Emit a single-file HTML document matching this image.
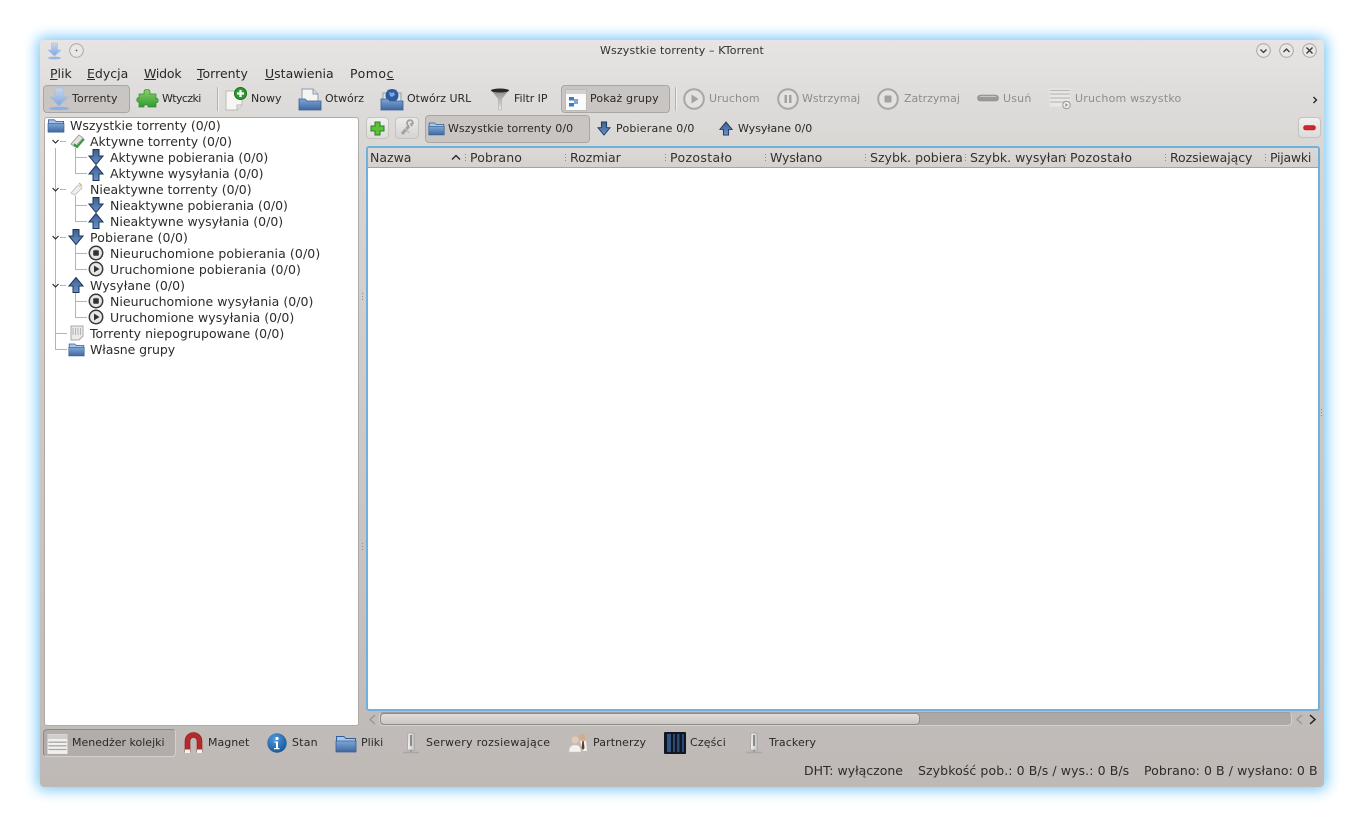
<!DOCTYPE html>
<html lang="pl"><head><meta charset="utf-8"><title>Wszystkie torrenty - KTorrent</title>
<style>
html,body{margin:0;padding:0;background:#fff;width:1364px;height:827px;overflow:hidden}
body{position:relative;font-family:"DejaVu Sans",sans-serif;color:#2a2826}
#win{position:absolute;left:40px;top:40px;width:1284px;height:747px;border-radius:4px;box-shadow:0 0 14px 3px #7cc8f8;background:linear-gradient(#e6e5e3 0,#dedcda 60px,#d7d4d1 130px,#c0bbb8 700px,#bfb9b6 100%)}
.t{position:absolute;white-space:nowrap;font-size:11px;line-height:16px;height:16px}
.m{font-size:12.5px}.r{font-size:12.5px;color:#2e2c2a}.d{color:#8f8d8b}.h{font-size:12.5px;color:#33312f}
.b{position:absolute;box-sizing:border-box;border:1px solid #aaa6a3;border-radius:4px;background:#c9c5c2}
svg{position:absolute;overflow:visible}
u{text-decoration:underline}
.tl{position:absolute;background:#b5b2af}
</style></head><body>
<svg width="0" height="0" style="left:0;top:0"><defs>
<linearGradient id="bl" x1="0" y1="0" x2="0" y2="1"><stop offset="0" stop-color="#7ea6d8"/><stop offset="1" stop-color="#3f68a0"/></linearGradient>
<linearGradient id="dn" x1="0" y1="0" x2="0" y2="1"><stop offset="0" stop-color="#3a5f92"/><stop offset="1" stop-color="#6b93c8"/></linearGradient>
<linearGradient id="ltb" x1="0" y1="0" x2="0" y2="1"><stop offset="0" stop-color="#c9d6ea"/><stop offset="1" stop-color="#7ea8e2"/></linearGradient>
<linearGradient id="gr" x1="0" y1="0" x2="0" y2="1"><stop offset="0" stop-color="#8ed062"/><stop offset="1" stop-color="#2f9a35"/></linearGradient>
<linearGradient id="fn" x1="0" y1="0" x2="0" y2="1"><stop offset="0" stop-color="#8a8886"/><stop offset="1" stop-color="#eceae8"/></linearGradient>
<linearGradient id="tw" x1="0" y1="0" x2="1" y2="0"><stop offset="0" stop-color="#f4f3f2"/><stop offset="1" stop-color="#c2c0be"/></linearGradient>
<radialGradient id="inf" cx=".4" cy=".3" r=".8"><stop offset="0" stop-color="#4f9ade"/><stop offset="1" stop-color="#12508f"/></radialGradient>
<symbol id="folder" viewBox="0 0 22 20"><path d="M1 3h8l2 2h10v14H1z" fill="#2f5e9a"/><path d="M2 4h7l1.500 2H20v2H2z" fill="#a9c4e6"/><path d="M1 8h20v11H1z" fill="url(#bl)" stroke="#36608f" stroke-width=".8"/></symbol>
<symbol id="down" viewBox="0 0 16 16"><path d="M5 .5h6v6.500h4L8 15.500 1 7h4z" fill="url(#dn)" stroke="#1c3558" stroke-width="1"/></symbol>
<symbol id="up" viewBox="0 0 16 16"><path d="M5 15.500h6V9h4L8 .5 1 9h4z" fill="url(#dn)" stroke="#1c3558" stroke-width="1"/></symbol>
<symbol id="stop" viewBox="0 0 16 16"><circle cx="8" cy="8" r="6.700" fill="#e8e7e5" stroke="#3a3836" stroke-width="1.500"/><rect x="5.200" y="5.200" width="5.600" height="5.600" rx="1" fill="#343230"/></symbol>
<symbol id="play" viewBox="0 0 16 16"><circle cx="8" cy="8" r="6.700" fill="#e8e7e5" stroke="#3a3836" stroke-width="1.500"/><path d="M6 4.500l5.500 3.500L6 11.500z" fill="#343230"/></symbol>
<symbol id="tower" viewBox="0 0 16 22"><path d="M5 1h6l.5 17h-7z" fill="url(#tw)" stroke="#a5a3a1" stroke-width=".7"/><path d="M8 3v11" stroke="#555" stroke-width="1.200"/><path d="M7 18h2v2.500H7z" fill="#999"/><path d="M0 20.500h16" stroke="#a9a7a5" stroke-width="1.600"/></symbol>
<symbol id="list" viewBox="0 0 22 22"><rect width="22" height="22" fill="#f1f0ef" stroke="#ccc" stroke-width=".5"/><path d="M0 3h22" stroke="#cfcecd" stroke-width="5"/><path d="M1 9h20M1 13h20M1 17h20" stroke="#aaa8a6" stroke-width="1.400"/></symbol>
</defs></svg>

<div id="win"></div>

<!-- title bar -->
<svg style="left:47px;top:42px" width="15" height="18" viewBox="0 0 15 18"><path d="M4.500 1h6v7h3.500l-6.500 6L1 8h3.500z" fill="url(#ltb)" stroke="#a6bcdc" stroke-width=".6"/><ellipse cx="7.500" cy="16" rx="6.500" ry="1.400" fill="#97b7e4"/></svg>
<svg style="left:69px;top:43px" width="15" height="15" viewBox="0 0 15 15"><circle cx="7.500" cy="7.500" r="6.800" fill="#e9e8e6" stroke="#aaa8a6"/><circle cx="7.500" cy="7.500" r=".9" fill="#555"/></svg>
<div class="t" style="left:600px;top:43px;color:#33312f;letter-spacing:.14px">Wszystkie torrenty – KTorrent</div>
<svg style="left:1256px;top:43px" width="68" height="16" viewBox="0 0 68 16">
<g fill="#e9e8e6" stroke="#a9a7a5"><circle cx="7.500" cy="7.500" r="6.800"/><circle cx="30.500" cy="7.500" r="6.800"/><circle cx="53.500" cy="7.500" r="6.800"/></g>
<g fill="none" stroke="#3a3836" stroke-width="1.300"><path d="M4.500 6.500l3 3 3-3M27.500 9l3-3 3 3M50.500 4.500l6 6M56.500 4.500l-6 6"/></g></svg>

<!-- menu -->
<div class="t m" style="left:50px;top:66px"><u>P</u>lik</div>
<div class="t m" style="left:87px;top:66px"><u>E</u>dycja</div>
<div class="t m" style="left:144px;top:66px;letter-spacing:-.2px"><u>W</u>idok</div>
<div class="t m" style="left:197px;top:66px"><u>T</u>orrenty</div>
<div class="t m" style="left:265px;top:66px"><u>U</u>stawienia</div>
<div class="t m" style="left:350px;top:66px;letter-spacing:.5px">Pomo<u>c</u></div>

<!-- main toolbar -->
<div class="b" style="left:43px;top:85px;width:87px;height:28px"></div>
<svg style="left:48px;top:87px" width="22" height="24" viewBox="0 0 22 24"><path d="M7 1h8v9h5l-9 9-9-9h5z" fill="url(#ltb)" stroke="#a7bcdc" stroke-width=".7"/><ellipse cx="11" cy="21.500" rx="10" ry="1.800" fill="#8db0e4"/></svg>
<div class="t" style="left:72px;top:91px;letter-spacing:.1px">Torrenty</div>
<svg style="left:136px;top:88px" width="23" height="21" viewBox="0 0 23 21"><path d="M8 6V3.500C8 1 14 1 14 3.500V6h6v4.500c3-1 3 5 0 4V19H12c1-3-5-3-4 0H3v-5C0 15 0 8.500 3 10V6z" fill="url(#gr)" stroke="#2f8a32" stroke-width=".7"/></svg>
<div class="t" style="left:162px;top:91px;letter-spacing:-.6px">Wtyczki</div>
<div style="position:absolute;left:217px;top:87px;width:1px;height:24px;background:#b4b1ae;border-right:1px solid #efeeec"></div>
<svg style="left:224px;top:87px" width="24" height="24" viewBox="0 0 24 24"><path d="M2 4h13l3 3v11l-5 5H2z" fill="#f7f6f5" stroke="#bcbab8"/><path d="M13 23v-5h5" fill="#e0dfdd" stroke="#bcbab8"/><circle cx="16.500" cy="6.500" r="6" fill="#2d9a2d" stroke="#15701a"/><path d="M16.500 3v7M13 6.500h7" stroke="#fff" stroke-width="2.200"/></svg>
<div class="t" style="left:251px;top:91px">Nowy</div>
<svg style="left:298px;top:87px" width="24" height="24" viewBox="0 0 24 24"><path d="M4 2h11l5 5v8H4z" fill="#f6f5f4" stroke="#8f9ab0"/><path d="M15 2v5h5" fill="#d8d8d8" stroke="#8f9ab0"/><path d="M1 12h6l2 2h14v9H1z" fill="url(#bl)" stroke="#36608f" stroke-width=".8"/></svg>
<div class="t" style="left:325px;top:91px">Otwórz</div>
<svg style="left:380px;top:87px" width="24" height="24" viewBox="0 0 24 24"><path d="M3 6h4l1-3h8l1 3h4v9H3z" fill="#dfe3ea" stroke="#8f9ab0"/><circle cx="12" cy="8.500" r="6.500" fill="#2d5aa0"/><path d="M9 5l3 1 2-1 1 3-3 2-2-1z" fill="#7ea6d8"/><path d="M1 12h7l2 2h13v9H1z" fill="url(#bl)" stroke="#36608f" stroke-width=".8"/></svg>
<div class="t" style="left:407px;top:91px">Otwórz URL</div>
<svg style="left:489px;top:87px" width="22" height="24" viewBox="0 0 22 24"><path d="M2 3h18L12.500 12v11h-3V12z" fill="url(#fn)" stroke="#a5a3a1" stroke-width=".5"/><ellipse cx="11" cy="3.500" rx="9" ry="2" fill="#2b2a29"/></svg>
<div class="t" style="left:514px;top:91px;letter-spacing:-.05px">Filtr IP</div>
<div class="b" style="left:561px;top:85px;width:109px;height:28px"></div>
<svg style="left:565px;top:89px" width="22" height="22" viewBox="0 0 22 22"><rect x=".5" y=".5" width="21" height="21" fill="#fbfbfa" stroke="#bbb"/><path d="M1 3h20" stroke="#d2d1d0" stroke-width="4"/><path d="M4 8h5v3.500H4zM4 14h5v3.500H4z" fill="#3d7ac0"/><path d="M9 10h4v5H9z" fill="#7aa6d8"/></svg>
<div class="t" style="left:590px;top:91px;letter-spacing:.15px">Pokaż grupy</div>
<div style="position:absolute;left:675px;top:87px;width:1px;height:24px;background:#b4b1ae;border-right:1px solid #efeeec"></div>
<svg style="left:683px;top:88px" width="22" height="22" viewBox="0 0 22 22"><circle cx="11" cy="11" r="9.800" fill="#e3e2e0" stroke="#a8a6a4" stroke-width="2"/><path d="M8.500 6.500l7 4.500-7 4.500z" fill="#a3a19f"/></svg>
<div class="t d" style="left:709px;top:91px;letter-spacing:.1px">Uruchom</div>
<svg style="left:777px;top:88px" width="22" height="22" viewBox="0 0 22 22"><circle cx="11" cy="11" r="9.800" fill="#e3e2e0" stroke="#a8a6a4" stroke-width="2"/><path d="M7.500 7h2.500v8H7.500zM12 7h2.500v8H12z" fill="#a3a19f"/></svg>
<div class="t d" style="left:802px;top:91px">Wstrzymaj</div>
<svg style="left:877px;top:88px" width="22" height="22" viewBox="0 0 22 22"><circle cx="11" cy="11" r="9.800" fill="#e3e2e0" stroke="#a8a6a4" stroke-width="2"/><rect x="7.500" y="7.500" width="7" height="7" rx="1" fill="#a3a19f"/></svg>
<div class="t d" style="left:904px;top:91px">Zatrzymaj</div>
<svg style="left:977px;top:94px" width="22" height="8" viewBox="0 0 22 8"><rect x=".5" y="1" width="21" height="6" rx="3" fill="#9c9a98" stroke="#8a8886" stroke-width=".6"/><path d="M3 2.500h16" stroke="#c8c6c4"/></svg>
<div class="t d" style="left:1003px;top:91px;letter-spacing:.2px">Usuń</div>
<svg style="left:1049px;top:88px" width="23" height="22" viewBox="0 0 23 22"><rect x=".5" y=".5" width="21" height="18" fill="#e9e8e6"/><path d="M1 2.500h20M1 6h20M1 10h20M1 14h20" stroke="#bdbbb9" stroke-width="1.300"/><circle cx="17.500" cy="17" r="3.700" fill="#eee" stroke="#999"/><path d="M16.300 15l3 2-3 2z" fill="#999"/></svg>
<div class="t d" style="left:1075px;top:91px;letter-spacing:.2px">Uruchom wszystko</div>
<svg style="left:1312px;top:96px" width="6" height="8" viewBox="0 0 6 8"><path d="M1.500 1l3 3-3 3" fill="none" stroke="#222" stroke-width="1.300"/></svg>

<!-- tree panel -->
<div style="position:absolute;box-sizing:border-box;left:44px;top:117px;width:315px;height:609px;background:#fff;border:1px solid #aeaaa7;border-radius:3px"></div>
<div class="tl" style="left:55px;top:148px;width:1px;height:202px"></div>
<div class="tl" style="left:75px;top:148px;width:1px;height:26px"></div><div class="tl" style="left:75px;top:157px;width:12px;height:1px"></div><div class="tl" style="left:75px;top:173px;width:12px;height:1px"></div>
<div class="tl" style="left:75px;top:196px;width:1px;height:26px"></div><div class="tl" style="left:75px;top:205px;width:12px;height:1px"></div><div class="tl" style="left:75px;top:221px;width:12px;height:1px"></div>
<div class="tl" style="left:75px;top:244px;width:1px;height:26px"></div><div class="tl" style="left:75px;top:253px;width:12px;height:1px"></div><div class="tl" style="left:75px;top:269px;width:12px;height:1px"></div>
<div class="tl" style="left:75px;top:292px;width:1px;height:26px"></div><div class="tl" style="left:75px;top:301px;width:12px;height:1px"></div><div class="tl" style="left:75px;top:317px;width:12px;height:1px"></div>
<div class="tl" style="left:60px;top:141px;width:6px;height:1px"></div><div class="tl" style="left:60px;top:189px;width:6px;height:1px"></div><div class="tl" style="left:60px;top:237px;width:6px;height:1px"></div><div class="tl" style="left:60px;top:285px;width:6px;height:1px"></div><div class="tl" style="left:55px;top:333px;width:12px;height:1px"></div><div class="tl" style="left:55px;top:349px;width:12px;height:1px"></div>
<svg style="left:51px;top:138px" width="10" height="156" viewBox="0 0 10 156"><g fill="none" stroke="#222" stroke-width="1.100"><path d="M1.500 2l3 3 3-3M1.500 50l3 3 3-3M1.500 98l3 3 3-3M1.500 146l3 3 3-3"/></g></svg>
<svg style="left:47px;top:117px" width="18" height="16"><use href="#folder" width="18" height="16"/></svg>
<div class="t r" style="left:70px;top:118px">Wszystkie torrenty (0/0)</div>
<svg style="left:69px;top:133px" width="17" height="16" viewBox="0 0 17 16"><path d="M2 11L10 2l4 3-8 9z" fill="#e5e4e2" stroke="#a3a19f"/><path d="M5 11l3 3 7-8" fill="none" stroke="#2e9a3c" stroke-width="2"/></svg>
<div class="t r" style="left:90px;top:134px">Aktywne torrenty (0/0)</div>
<svg style="left:88px;top:149px" width="16" height="16"><use href="#down" width="16" height="16"/></svg>
<div class="t r" style="left:110px;top:150px">Aktywne pobierania (0/0)</div>
<svg style="left:88px;top:165px" width="16" height="16"><use href="#up" width="16" height="16"/></svg>
<div class="t r" style="left:110px;top:166px">Aktywne wysyłania (0/0)</div>
<svg style="left:69px;top:181px" width="16" height="16" viewBox="0 0 16 16"><path d="M2 12L9 4l4 3-7 7z" fill="#efeeec" stroke="#c9c7c5"/><path d="M10 2l3 3" stroke="#d2b36a" stroke-width="1.500"/></svg>
<div class="t r" style="left:90px;top:182px">Nieaktywne torrenty (0/0)</div>
<svg style="left:88px;top:197px" width="16" height="16"><use href="#down" width="16" height="16"/></svg>
<div class="t r" style="left:110px;top:198px">Nieaktywne pobierania (0/0)</div>
<svg style="left:88px;top:213px" width="16" height="16"><use href="#up" width="16" height="16"/></svg>
<div class="t r" style="left:110px;top:214px">Nieaktywne wysyłania (0/0)</div>
<svg style="left:68px;top:229px" width="16" height="16"><use href="#down" width="16" height="16"/></svg>
<div class="t r" style="left:90px;top:230px;letter-spacing:.13px">Pobierane (0/0)</div>
<svg style="left:88px;top:245px" width="16" height="16"><use href="#stop" width="16" height="16"/></svg>
<div class="t r" style="left:110px;top:246px;letter-spacing:.1px">Nieuruchomione pobierania (0/0)</div>
<svg style="left:88px;top:261px" width="16" height="16"><use href="#play" width="16" height="16"/></svg>
<div class="t r" style="left:110px;top:262px;letter-spacing:.11px">Uruchomione pobierania (0/0)</div>
<svg style="left:68px;top:277px" width="16" height="16"><use href="#up" width="16" height="16"/></svg>
<div class="t r" style="left:90px;top:278px;letter-spacing:.07px">Wysyłane (0/0)</div>
<svg style="left:88px;top:293px" width="16" height="16"><use href="#stop" width="16" height="16"/></svg>
<div class="t r" style="left:110px;top:294px;letter-spacing:.03px">Nieuruchomione wysyłania (0/0)</div>
<svg style="left:88px;top:309px" width="16" height="16"><use href="#play" width="16" height="16"/></svg>
<div class="t r" style="left:110px;top:310px;letter-spacing:.04px">Uruchomione wysyłania (0/0)</div>
<svg style="left:69px;top:325px" width="16" height="16" viewBox="0 0 16 16"><path d="M2 1h12v10l-4 4H2z" fill="#eceae8" stroke="#aaa8a6"/><path d="M4 3v7M6.500 3v7M9 3v7M11.500 3v7" stroke="#b5b3b1"/></svg>
<div class="t r" style="left:90px;top:326px;letter-spacing:.03px">Torrenty niepogrupowane (0/0)</div>
<svg style="left:68px;top:341px" width="17" height="16"><use href="#folder" width="17" height="16"/></svg>
<div class="t r" style="left:90px;top:342px;letter-spacing:-.08px">Własne grupy</div>

<!-- group tabs -->
<div class="b" style="left:366px;top:117px;width:23px;height:22px;background:linear-gradient(#f2f1f0,#dedcda);border-color:#c5c3c1"></div>
<svg style="left:370px;top:121px" width="15" height="15" viewBox="0 0 15 15"><path d="M5 1h5v4h4v5h-4v4H5v-4H1V5h4z" fill="#5cc03c" stroke="#2a7f1e"/></svg>
<div class="b" style="left:395px;top:117px;width:24px;height:22px;background:linear-gradient(#ebeae9,#d6d4d2);border-color:#c5c3c1"></div>
<svg style="left:400px;top:120px" width="15" height="16" viewBox="0 0 15 16"><path d="M2 14L9 6" stroke="#a3a19f" stroke-width="3"/><path d="M9 6a3 3 0 1 1 4-3l-2 1 1 1-1 1" fill="none" stroke="#a3a19f" stroke-width="1.800"/><path d="M9 13l-4-5" stroke="#bdbbb9" stroke-width="1.500"/></svg>
<div class="b" style="left:425px;top:115px;width:165px;height:28px"></div>
<svg style="left:428px;top:120px" width="17" height="16"><use href="#folder" width="17" height="16"/></svg>
<div class="t" style="left:448px;top:121px;letter-spacing:.05px">Wszystkie torrenty 0/0</div>
<svg style="left:597px;top:121px" width="14" height="15"><use href="#down" width="14" height="15"/></svg>
<div class="t" style="left:616px;top:121px;letter-spacing:.2px">Pobierane 0/0</div>
<svg style="left:719px;top:121px" width="14" height="15"><use href="#up" width="14" height="15"/></svg>
<div class="t" style="left:738px;top:121px">Wysyłane 0/0</div>
<div class="b" style="left:1298px;top:117px;width:23px;height:21px;background:linear-gradient(#f2f1f0,#dedcda);border-color:#c5c3c1"></div>
<svg style="left:1303px;top:125px" width="13" height="6" viewBox="0 0 13 6"><rect x=".5" y=".5" width="12" height="4.500" rx="2" fill="#d3262c" stroke="#a01c22" stroke-width=".5"/></svg>

<!-- table -->
<div style="position:absolute;box-sizing:border-box;left:366px;top:146px;width:954px;height:565px;background:#fff;border:2px solid #6db1dc;border-radius:3px"></div>
<div style="position:absolute;left:368px;top:148px;width:950px;height:19px;background:linear-gradient(#dcdad8,#d4d1ce);border-bottom:1px solid #a5a2a0"></div>
<div class="t h" style="left:370px;top:150px">Nazwa</div>
<svg style="left:451px;top:154px" width="10" height="7" viewBox="0 0 10 7"><path d="M1 5.500l4-4 4 4" fill="none" stroke="#222" stroke-width="1.300"/></svg>
<div class="t h" style="left:470px;top:150px;letter-spacing:.15px">Pobrano</div>
<div class="t h" style="left:570px;top:150px">Rozmiar</div>
<div class="t h" style="left:670px;top:150px;letter-spacing:.35px">Pozostało</div>
<div class="t h" style="left:770px;top:150px;letter-spacing:-.1px">Wysłano</div>
<div class="t h" style="left:870px;top:150px;letter-spacing:.02px">Szybk. pobiera</div>
<div class="t h" style="left:970px;top:150px;letter-spacing:.02px">Szybk. wysyłan</div>
<div class="t h" style="left:1070px;top:150px;letter-spacing:.35px">Pozostało</div>
<div class="t h" style="left:1170px;top:150px;letter-spacing:-.08px">Rozsiewający</div>
<div class="t h" style="left:1270px;top:150px;letter-spacing:-.25px">Pijawki</div>
<svg style="left:464px;top:153px" width="804" height="10" viewBox="0 0 804 10"><g fill="#8f8d8b"><path d="M1 1h1v1H1zM1 4h1v1H1zM1 7h1v1H1z"/><path d="M101 1h1v1h-1zM101 4h1v1h-1zM101 7h1v1h-1zM201 1h1v1h-1zM201 4h1v1h-1zM201 7h1v1h-1zM301 1h1v1h-1zM301 4h1v1h-1zM301 7h1v1h-1zM401 1h1v1h-1zM401 4h1v1h-1zM401 7h1v1h-1zM501 1h1v1h-1zM501 4h1v1h-1zM501 7h1v1h-1zM601 1h1v1h-1zM601 4h1v1h-1zM601 7h1v1h-1zM701 1h1v1h-1zM701 4h1v1h-1zM701 7h1v1h-1zM801 1h1v1h-1zM801 4h1v1h-1zM801 7h1v1h-1z"/></g></svg>

<!-- scrollbar -->
<svg style="left:368px;top:714px" width="9" height="11" viewBox="0 0 9 11"><path d="M7 1L2 5.500 7 10" fill="none" stroke="#9a9693" stroke-width="1.300"/></svg>
<div style="position:absolute;box-sizing:border-box;left:379px;top:712px;width:913px;height:14px;border:1px solid #d5d1ce;border-top-color:#a09c99;border-radius:4px;background:#aea9a6"></div>
<div style="position:absolute;box-sizing:border-box;left:380px;top:713px;width:540px;height:12px;border:1px solid #8f8b88;border-radius:4px;background:linear-gradient(#e0dedc,#c9c5c2)"></div>
<svg style="left:1295px;top:714px" width="9" height="11" viewBox="0 0 9 11"><path d="M7 1L2 5.500 7 10" fill="none" stroke="#9a9693" stroke-width="1.300"/></svg>
<svg style="left:1308px;top:714px" width="9" height="11" viewBox="0 0 9 11"><path d="M2 1l5 4.500L2 10" fill="none" stroke="#222" stroke-width="1.500"/></svg>

<!-- splitter dots -->
<svg style="left:362px;top:293px" width="3" height="260" viewBox="0 0 3 260"><g fill="#8f8b88"><path d="M0 0h1v1H0zM0 3h1v1H0zM0 6h1v1H0zM0 250h1v1H0zM0 253h1v1H0zM0 256h1v1H0z"/></g></svg>
<svg style="left:1321px;top:409px" width="3" height="10" viewBox="0 0 3 10"><path d="M0 0h1v1H0zM0 3h1v1H0zM0 6h1v1H0z" fill="#8f8b88"/></svg>

<!-- bottom tabs -->
<div class="b" style="left:43px;top:729px;width:133px;height:28px;background:#b2adaa;border-color:#8e8a87 #d3d0cd #d3d0cd #8e8a87"></div>
<svg style="left:47px;top:734px" width="21" height="20"><use href="#list" width="21" height="20"/></svg>
<div class="t" style="left:72px;top:735px">Menedżer kolejki</div>
<svg style="left:184px;top:732px" width="19" height="22" viewBox="0 0 19 22"><path d="M1 20V9a8.500 8.500 0 0 1 17 0v11h-5V9a3.500 3.500 0 0 0-7 0v11z" fill="#b52a2a" stroke="#8a1e1e" stroke-width=".6"/><path d="M1 17.500h5V21H1zM13 17.500h5V21h-5z" fill="#f4f3f2"/></svg>
<div class="t" style="left:208px;top:735px">Magnet</div>
<svg style="left:267px;top:733px" width="20" height="20" viewBox="0 0 20 20"><circle cx="10" cy="10" r="9.700" fill="url(#inf)"/><circle cx="10" cy="5.500" r="1.600" fill="#fff"/><path d="M7.500 8.500h3.500v6.500h1.500v1.300h-5.500V15H9V9.800H7.500z" fill="#fff"/></svg>
<div class="t" style="left:292px;top:735px;letter-spacing:.2px">Stan</div>
<svg style="left:335px;top:733px" width="22" height="20"><use href="#folder" width="22" height="20"/></svg>
<div class="t" style="left:361px;top:735px">Pliki</div>
<svg style="left:403px;top:732px" width="16" height="22"><use href="#tower" width="16" height="22"/></svg>
<div class="t" style="left:426px;top:735px;letter-spacing:.25px">Serwery rozsiewające</div>
<svg style="left:568px;top:733px" width="20" height="20" viewBox="0 0 20 20"><circle cx="7" cy="7" r="3.500" fill="#e6c9b2"/><path d="M1 19c0-6 3-7 6-7s6 1 6 7z" fill="#f3f2f1" stroke="#cbc9c7" stroke-width=".5"/><circle cx="14.500" cy="4" r="3" fill="#d8aa84"/><path d="M12 8h6l1 10h-4z" fill="#f3f2f1"/><path d="M14.300 8h1.400l.8 7-1.500 2-1.300-2z" fill="#6b3a1c"/></svg>
<div class="t" style="left:593px;top:735px;letter-spacing:.1px">Partnerzy</div>
<svg style="left:664px;top:732px" width="22" height="22" viewBox="0 0 22 22"><rect width="22" height="22" rx="1" fill="#0f1722"/><path d="M3 2h4v18H3z" fill="#33547e"/><path d="M9 2h2v18H9zM13 2h2.500v18H13zM18 2h2v18h-2z" fill="#2b4a74"/></svg>
<div class="t" style="left:690px;top:735px;letter-spacing:.15px">Części</div>
<svg style="left:746px;top:732px" width="16" height="22"><use href="#tower" width="16" height="22"/></svg>
<div class="t" style="left:769px;top:735px;letter-spacing:.12px">Trackery</div>

<!-- status -->
<div class="t r" style="left:804px;top:763px">DHT: wyłączone</div>
<div class="t r" style="left:918px;top:763px;letter-spacing:.09px">Szybkość pob.: 0 B/s / wys.: 0 B/s</div>
<div class="t r" style="left:1144px;top:763px;letter-spacing:.08px">Pobrano: 0 B / wysłano: 0 B</div>
</body></html>
